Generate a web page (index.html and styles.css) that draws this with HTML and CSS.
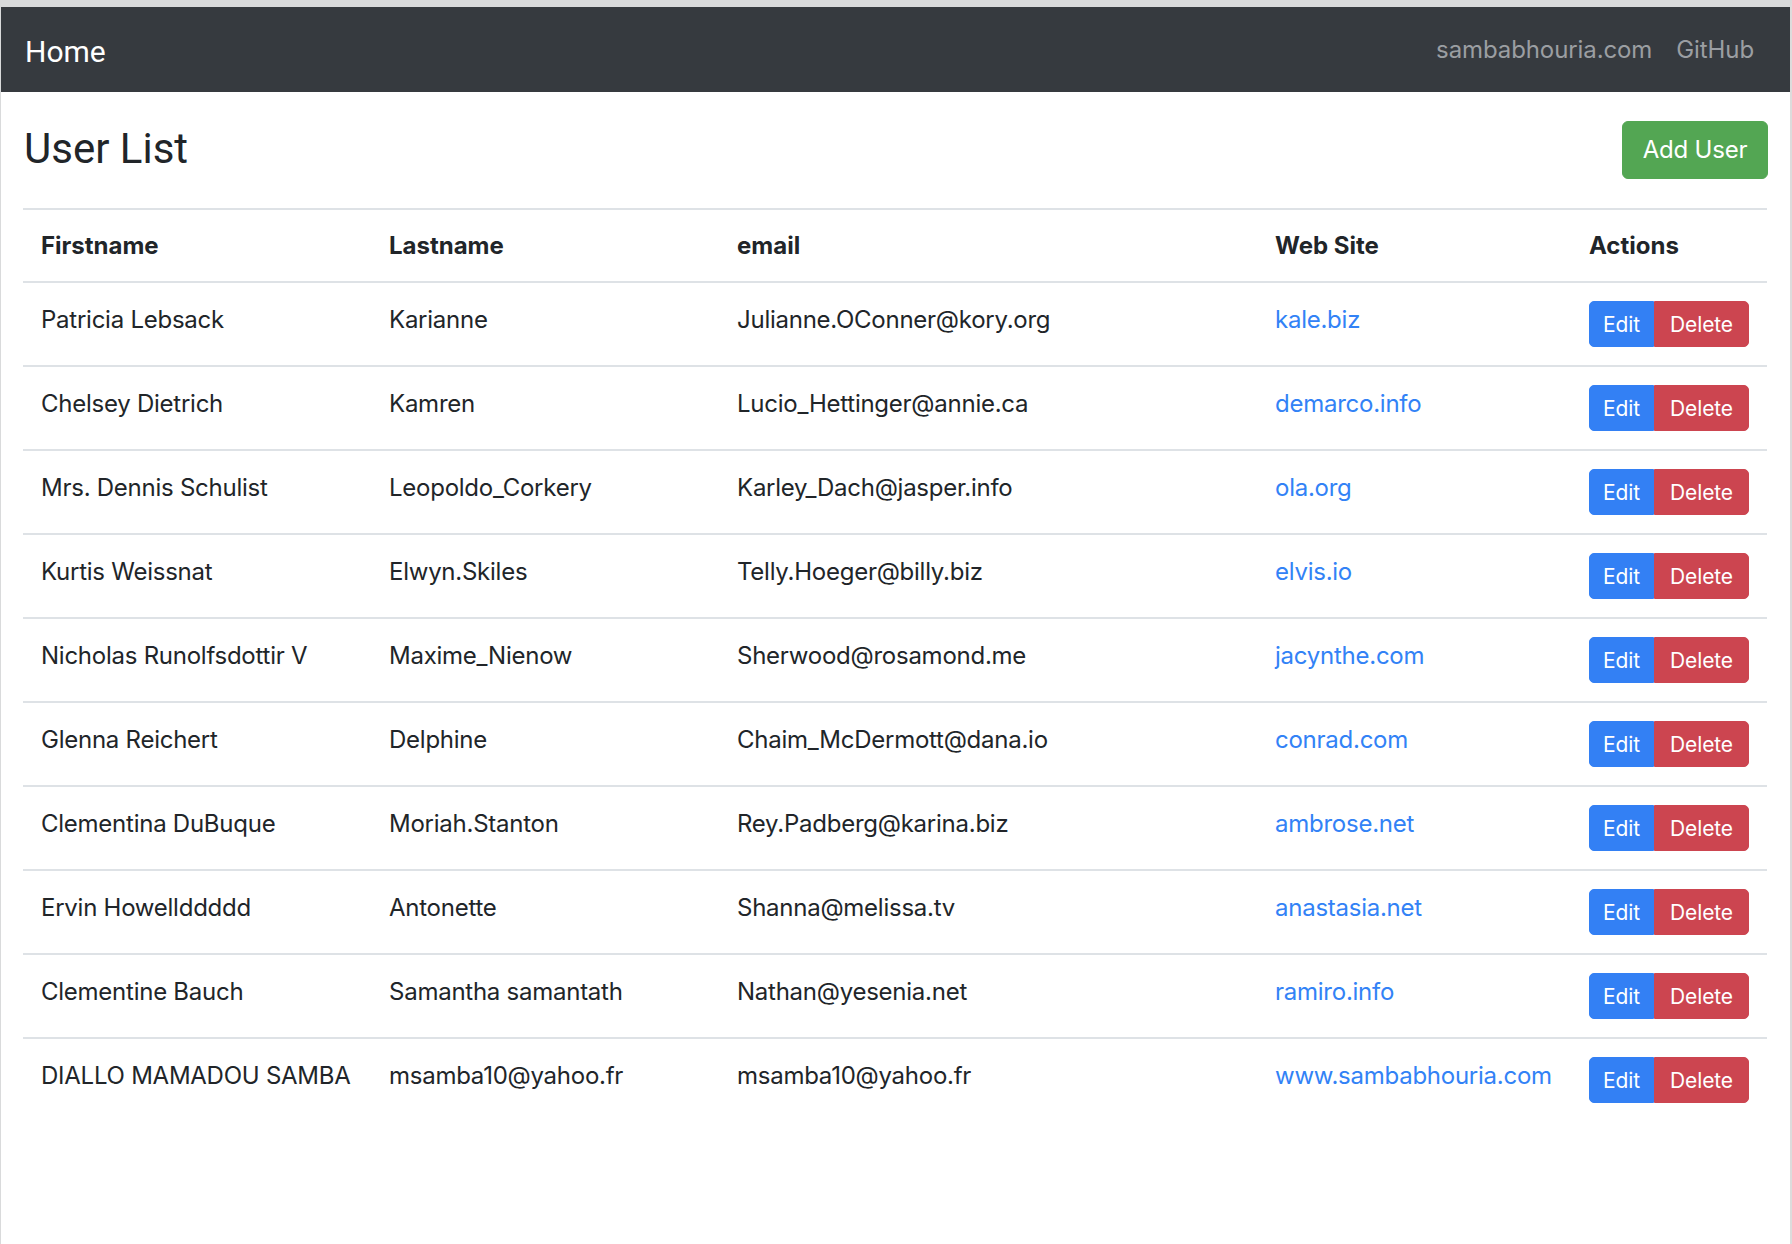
FILE: index.html
```html
<!DOCTYPE html>
<html lang="en">
<head>
<meta charset="utf-8">
<title>User List</title>
<link rel="stylesheet" href="styles.css">
</head>
<body>
<div class="frame">
  <nav class="navbar">
    <a class="brand" href="#">Home</a>
    <div class="nav-links">
      <a class="nav-link" href="#">sambabhouria.com</a>
      <a class="nav-link" href="#">GitHub</a>
    </div>
  </nav>
  <main class="container">
    <div class="title-row">
      <h3 class="title">User List</h3>
      <button class="btn btn-success">Add User</button>
    </div>
    <table class="table">
      <colgroup>
        <col class="c1"><col class="c2"><col class="c3"><col class="c4"><col class="c5">
      </colgroup>
      <thead>
        <tr><th>Firstname</th><th>Lastname</th><th>email</th><th>Web Site</th><th>Actions</th></tr>
      </thead>
      <tbody>
        <tr><td>Patricia Lebsack</td><td>Karianne</td><td>Julianne.OConner@kory.org</td><td><a href="#">kale.biz</a></td><td class="actions"><div class="btn-group"><button class="btn-sm edit">Edit</button><button class="btn-sm del">Delete</button></div></td></tr>
        <tr><td>Chelsey Dietrich</td><td>Kamren</td><td>Lucio_Hettinger@annie.ca</td><td><a href="#">demarco.info</a></td><td class="actions"><div class="btn-group"><button class="btn-sm edit">Edit</button><button class="btn-sm del">Delete</button></div></td></tr>
        <tr><td>Mrs. Dennis Schulist</td><td>Leopoldo_Corkery</td><td>Karley_Dach@jasper.info</td><td><a href="#">ola.org</a></td><td class="actions"><div class="btn-group"><button class="btn-sm edit">Edit</button><button class="btn-sm del">Delete</button></div></td></tr>
        <tr><td>Kurtis Weissnat</td><td>Elwyn.Skiles</td><td>Telly.Hoeger@billy.biz</td><td><a href="#">elvis.io</a></td><td class="actions"><div class="btn-group"><button class="btn-sm edit">Edit</button><button class="btn-sm del">Delete</button></div></td></tr>
        <tr><td>Nicholas Runolfsdottir V</td><td>Maxime_Nienow</td><td>Sherwood@rosamond.me</td><td><a href="#">jacynthe.com</a></td><td class="actions"><div class="btn-group"><button class="btn-sm edit">Edit</button><button class="btn-sm del">Delete</button></div></td></tr>
        <tr><td>Glenna Reichert</td><td>Delphine</td><td>Chaim_McDermott@dana.io</td><td><a href="#">conrad.com</a></td><td class="actions"><div class="btn-group"><button class="btn-sm edit">Edit</button><button class="btn-sm del">Delete</button></div></td></tr>
        <tr><td>Clementina DuBuque</td><td>Moriah.Stanton</td><td>Rey.Padberg@karina.biz</td><td><a href="#">ambrose.net</a></td><td class="actions"><div class="btn-group"><button class="btn-sm edit">Edit</button><button class="btn-sm del">Delete</button></div></td></tr>
        <tr><td>Ervin Howellddddd</td><td>Antonette</td><td>Shanna@melissa.tv</td><td><a href="#">anastasia.net</a></td><td class="actions"><div class="btn-group"><button class="btn-sm edit">Edit</button><button class="btn-sm del">Delete</button></div></td></tr>
        <tr><td>Clementine Bauch</td><td>Samantha samantath</td><td>Nathan@yesenia.net</td><td><a href="#">ramiro.info</a></td><td class="actions"><div class="btn-group"><button class="btn-sm edit">Edit</button><button class="btn-sm del">Delete</button></div></td></tr>
        <tr><td>DIALLO MAMADOU SAMBA</td><td>msamba10@yahoo.fr</td><td>msamba10@yahoo.fr</td><td><a href="#">www.sambabhouria.com</a></td><td class="actions"><div class="btn-group"><button class="btn-sm edit">Edit</button><button class="btn-sm del">Delete</button></div></td></tr>
      </tbody>
    </table>
  </main>
</div>
</body>
</html>
```

FILE: styles.css
```css
* { box-sizing: border-box; }
html, body { margin: 0; padding: 0; }
body {
  background: #ffffff;
  color: #212529;
  font-family: "Inter", "Noto Sans", sans-serif;
  font-size: 24px;
  line-height: 1.5;
}
.frame {
  height: 1244px;
  border-top: 7px solid #d9dadb;
  border-left: 1px solid #d9dadb;
  border-right: 2px solid #dcdcdc;
  background: #fff;
}
.navbar {
  height: 85px;
  background: #363a3f;
  display: flex;
  align-items: center;
  justify-content: space-between;
  padding: 0 24px;
}
.brand {
  font-family: "Roboto", "Liberation Sans", sans-serif;
  font-size: 30px;
  color: #ffffff;
  text-decoration: none;
  line-height: 45px;
  padding-top: 4px;
}
.nav-links { display: flex; }
.nav-link {
  color: #9b9ea2;
  text-decoration: none;
  padding: 0 12px;
  font-size: 24px;
  line-height: 36px;
  letter-spacing: -0.1px;
}
.container {
  padding: 29px 23px 0 22px;
}
.title-row {
  display: flex;
  justify-content: space-between;
  align-items: flex-start;
  margin-bottom: 29px;
  margin-right: -1px;
}
.title {
  margin: 0;
  font-family: "Roboto", "Liberation Sans", sans-serif;
  font-weight: 400;
  font-size: 42px;
  line-height: 50px;
  padding-left: 1px;
  padding-top: 3px;
}
.btn {
  font-family: inherit;
  font-size: 24px;
  line-height: 36px;
  border: 1px solid transparent;
  border-radius: 6px;
  color: #fff;
  cursor: pointer;
  letter-spacing: -0.2px;
}
.btn-success { background: #53a653; border-color: #53a653; height: 58px; width: 146px; padding: 0; }
.table {
  width: 100%;
  border-collapse: collapse;
  table-layout: fixed;
}
.c1 { width: 348px; }
.c2 { width: 348px; }
.c3 { width: 538px; }
.c4 { width: 314px; }
.c5 { width: auto; }
.table th, .table td {
  text-align: left;
  vertical-align: top;
  line-height: 36px;
  border-top: 2px solid #dee2e6;
  white-space: nowrap;
  padding: 19px 18px 17px;
  letter-spacing: -0.25px;
}
.table th {
  font-weight: 700;
  border-bottom: 2px solid #dee2e6;
  padding-top: 18px;
  padding-bottom: 17px;
  letter-spacing: 0;
}
.table td.actions { padding-top: 18px; padding-bottom: 18px; }
.table tbody tr:first-child td { border-top: none; }
.table a { color: #3282f6; text-decoration: none; }
.btn-group { display: inline-flex; }
.btn-sm {
  font-family: inherit;
  font-size: 21px;
  line-height: 31px;
  height: 46px;
  padding: 6px 12px;
  border: 1px solid transparent;
  color: #fff;
  cursor: pointer;
  letter-spacing: -0.1px;
}
.edit {
  background: #3380f4;
  border-color: #3380f4;
  border-radius: 5px 0 0 5px;
  width: 65px;
}
.del {
  background: #cc4550;
  border-color: #cc4550;
  border-radius: 0 5px 5px 0;
  width: 95px;
}
```
